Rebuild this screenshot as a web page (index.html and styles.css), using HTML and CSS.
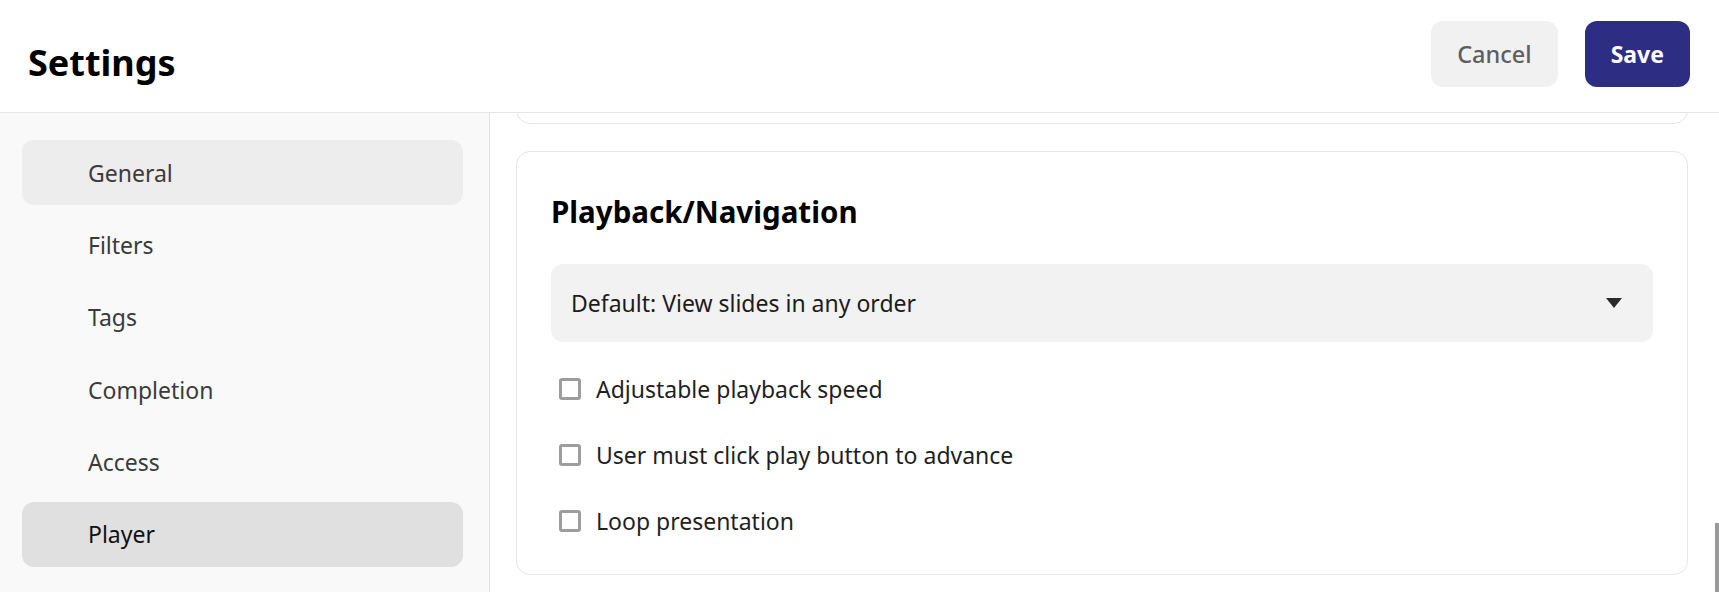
FILE: index.html
```html
<!DOCTYPE html>
<html lang="en">
<head>
<meta charset="utf-8">
<title>Settings</title>
<link rel="stylesheet" href="styles.css">
</head>
<body>
<div class="app">
  <header class="topbar">
    <h1 class="title">Settings</h1>
    <div class="actions">
      <button class="btn btn-cancel" type="button">Cancel</button>
      <button class="btn btn-save" type="button">Save</button>
    </div>
  </header>
  <div class="body">
    <nav class="sidebar">
      <a class="nav-item nav-hover">General</a>
      <a class="nav-item">Filters</a>
      <a class="nav-item">Tags</a>
      <a class="nav-item">Completion</a>
      <a class="nav-item">Access</a>
      <a class="nav-item nav-active">Player</a>
    </nav>
    <main class="content">
      <section class="card card-prev"></section>
      <section class="card card-main">
        <h2 class="card-title">Playback/Navigation</h2>
        <div class="select">
          <span class="select-value">Default: View slides in any order</span>
          <svg class="caret" width="16" height="10" viewBox="0 0 16 10"><path d="M0 0H16L8 10Z" fill="#2b2b2b"/></svg>
        </div>
        <ul class="options">
          <li class="option"><span class="box"></span><span>Adjustable playback speed</span></li>
          <li class="option"><span class="box"></span><span>User must click play button to advance</span></li>
          <li class="option"><span class="box"></span><span>Loop presentation</span></li>
        </ul>
      </section>
      <div class="scroll-thumb"></div>
    </main>
  </div>
</div>
</body>
</html>
```

FILE: styles.css
```css
* { box-sizing: border-box; }
html, body { margin: 0; height: 100%; }
body {
  font-family: "Noto Sans", "Open Sans", sans-serif;
  color: #222;
  background: #fff;
  overflow: hidden;
}
.app { display: flex; flex-direction: column; height: 592px; }
.topbar {
  height: 113px;
  flex: none;
  display: flex;
  align-items: center;
  justify-content: space-between;
  padding: 0 29px 4px 28px;
  border-bottom: 1px solid #e6e6e6;
}
.title {
  margin: 0;
  padding-top: 19px;
  font-size: 36px;
  font-weight: 700;
  color: #000;
  line-height: 1.36;
}
.actions { display: flex; gap: 27px; }
.btn {
  height: 66px;
  padding: 0 26px;
  border: none;
  border-radius: 12px;
  font-family: inherit;
  font-size: 23.5px;
  font-weight: 500;
}
.btn-cancel { background: #f1f1f1; color: #5e5e5e; }
.btn-save { background: #2e2d84; color: #fff; font-weight: 700; font-size: 23px; }
.body { flex: 1; display: flex; min-height: 0; }
.sidebar {
  width: 490px;
  flex: none;
  background: #f9f9f9;
  border-right: 1px solid #e3e3e3;
  padding: 27px 26px 0 22px;
  display: flex;
  flex-direction: column;
  gap: 7.4px;
}
.nav-item {
  height: 65px;
  flex: none;
  display: flex;
  align-items: center;
  padding-left: 66px;
  border-radius: 12px;
  font-size: 23px;
  color: #3b3b3b;
}
.nav-hover { background: #ededed; }
.nav-active { background: #e0e0e0; color: #111; }
.content {
  flex: 1;
  position: relative;
  overflow: hidden;
  display: flex;
  flex-direction: column;
  justify-content: flex-end;
  gap: 27px;
  padding: 0 31px 17px 26px;
}
.card {
  flex: none;
  border: 1px solid #e6e6e6;
  border-radius: 14px;
  background: #fff;
}
.card-prev { height: 300px; }
.card-main { padding: 40px 34px 31px 34px; }
.card-title {
  margin: 0 0 32px 0;
  font-size: 29.5px;
  font-weight: 700;
  color: #000;
  line-height: 1.36;
}
.select {
  height: 78px;
  background: #f2f2f2;
  border-radius: 12px;
  display: flex;
  align-items: center;
  justify-content: space-between;
  padding: 0 31px 0 20px;
  font-size: 23px;
  color: #1c1c1c;
}
.caret { display: block; }
.options {
  list-style: none;
  margin: 25px 0 0;
  padding: 0 0 0 8px;
  display: flex;
  flex-direction: column;
  gap: 22px;
}
.option {
  height: 44px;
  display: flex;
  align-items: center;
  gap: 15px;
  font-size: 23px;
  color: #1f1f1f;
}
.box {
  width: 22px;
  height: 22px;
  border: 3px solid #9d9d9d;
  border-radius: 3px;
  flex: none;
}
.scroll-thumb {
  position: absolute;
  right: 0;
  bottom: 0;
  width: 4px;
  height: 69px;
  background: #9a9a9a;
}
```
